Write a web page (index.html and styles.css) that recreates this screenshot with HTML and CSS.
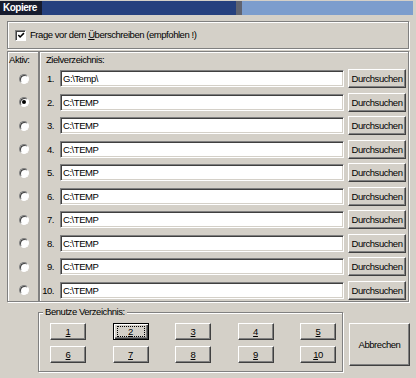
FILE: index.html
```html
<!DOCTYPE html>
<html>
<head>
<meta charset="utf-8">
<link rel="stylesheet" href="styles.css">
</head>
<body>
<div class="window">
  <div class="titlebar">
    <div class="t-name">Kopiere</div>
    <div class="t-dark"></div>
    <div class="t-gap"></div>
    <div class="t-light"></div>
  </div>

  <div class="group opts">
    <span class="check"><svg width="9" height="9" viewBox="0 0 9 9"><polyline points="1.5,4 3.5,6.2 7.8,1.8" fill="none" stroke="#000" stroke-width="1.7"/></svg></span>
    <span class="lbl">Frage vor dem <u>Ü</u>berschreiben (empfohlen !)</span>
  </div>

  <div class="lists">
    <div class="group aktiv">
      <div class="head">Aktiv:</div>
      <div class="radios">
        <span class="radio"></span>
        <span class="radio on"></span>
        <span class="radio"></span>
        <span class="radio"></span>
        <span class="radio"></span>
        <span class="radio"></span>
        <span class="radio"></span>
        <span class="radio"></span>
        <span class="radio"></span>
        <span class="radio"></span>
      </div>
    </div>
    <div class="group ziel">
      <div class="head">Zielverzeichnis:</div>
      <div class="rows">
        <span class="num">1.</span><div class="field">G:\Temp\</div><div class="btn">Durchsuchen</div>
        <span class="num">2.</span><div class="field">C:\TEMP</div><div class="btn">Durchsuchen</div>
        <span class="num">3.</span><div class="field">C:\TEMP</div><div class="btn">Durchsuchen</div>
        <span class="num">4.</span><div class="field">C:\TEMP</div><div class="btn">Durchsuchen</div>
        <span class="num">5.</span><div class="field">C:\TEMP</div><div class="btn">Durchsuchen</div>
        <span class="num">6.</span><div class="field">C:\TEMP</div><div class="btn">Durchsuchen</div>
        <span class="num">7.</span><div class="field">C:\TEMP</div><div class="btn">Durchsuchen</div>
        <span class="num">8.</span><div class="field">C:\TEMP</div><div class="btn">Durchsuchen</div>
        <span class="num">9.</span><div class="field">C:\TEMP</div><div class="btn">Durchsuchen</div>
        <span class="num">10.</span><div class="field">C:\TEMP</div><div class="btn">Durchsuchen</div>
      </div>
    </div>
  </div>

  <div class="bottom">
    <fieldset class="benutze">
      <legend>Benutze Verzeichnis:</legend>
      <div class="picks">
        <div class="btn"><u>1</u></div>
        <div class="btn default"><span class="focus"><u>2</u></span></div>
        <div class="btn"><u>3</u></div>
        <div class="btn"><u>4</u></div>
        <div class="btn"><u>5</u></div>
        <div class="btn"><u>6</u></div>
        <div class="btn"><u>7</u></div>
        <div class="btn"><u>8</u></div>
        <div class="btn"><u>9</u></div>
        <div class="btn"><u>1</u>0</div>
      </div>
    </fieldset>
    <div class="btn cancel">Abbrechen</div>
  </div>
</div>
</body>
</html>
```

FILE: styles.css
```css
html, body {
  margin: 0;
  padding: 0;
  background: #d4d0c8;
}

.window {
  width: 416px;
  height: 378px;
  overflow: hidden;
  background: #d4d0c8;
  font-family: "Liberation Sans", Arial, sans-serif;
  font-size: 9.5px;
  letter-spacing: -0.45px;
  color: #000;
}

.titlebar {
  display: flex;
  margin-top: 1px;
  width: 413px;
  height: 14px;
}

.t-name {
  width: 39px;
  padding-left: 3px;
  background: #161b2e;
  color: #fff;
  font-weight: bold;
  font-size: 10px;
  letter-spacing: -0.5px;
  line-height: 14px;
}

.t-dark {
  width: 194px;
  background: #25407e;
}

.t-gap {
  width: 6px;
  background: #5f6370;
}

.t-light {
  flex: 1;
  background: #7c9dcd;
}

.group {
  box-sizing: border-box;
  border: 1px solid #808080;
  box-shadow: inset 1px 1px 0 #fff, 1px 1px 0 #fff;
}

.opts {
  margin: 6px 0 0 7px;
  width: 402px;
  height: 28px;
  display: flex;
  align-items: center;
  padding-left: 7px;
  gap: 4px;
}

.check {
  box-sizing: border-box;
  width: 11px;
  height: 11px;
  background: #fff;
  border: 1px solid;
  border-color: #808080 #fff #fff #808080;
  box-shadow: inset 1px 1px 0 #404040;
  display: flex;
  align-items: center;
  justify-content: center;
}

.check svg {
  display: block;
  margin: 1px 0 0 1px;
}

.lbl {
  line-height: 12px;
}

.lists {
  display: flex;
  margin: 2px 0 0 7px;
  height: 251px;
}

.aktiv {
  width: 32px;
  padding: 2px 0 0 1px;
}

.ziel {
  width: 370px;
  padding: 2px 2px 0 0;
}

.head {
  line-height: 12px;
  height: 12px;
  margin-bottom: 3px;
}

.ziel .head {
  padding-left: 6px;
}

.radios, .rows {
  display: grid;
  grid-auto-rows: 19px;
  row-gap: 4.5px;
}

.radios {
  justify-items: center;
  align-items: center;
  padding-left: 1px;
}

.rows {
  grid-template-columns: 15px 285px 58px;
  column-gap: 4px;
  align-items: center;
}

.num {
  text-align: right;
  padding-right: 1px;
}

.radio {
  box-sizing: border-box;
  position: relative;
  width: 10px;
  height: 10px;
  border-radius: 50%;
  background: #fff;
  border: 1px solid;
  border-color: #808080 #fff #fff #808080;
  box-shadow: inset 1px 1px 0 #404040;
}

.radio.on::after {
  content: "";
  position: absolute;
  left: 2px;
  top: 2px;
  width: 4px;
  height: 4px;
  border-radius: 50%;
  background: #000;
}

.field {
  box-sizing: border-box;
  height: 17px;
  margin-left: 1px;
  background: #fff;
  border: 1px solid;
  border-color: #808080 #fff #fff #808080;
  box-shadow: inset 1px 1px 0 #404040, inset -1px -1px 0 #d4d0c8;
  padding: 0 0 0 2px;
  line-height: 15px;
  white-space: nowrap;
}

.btn {
  box-sizing: border-box;
  display: flex;
  align-items: center;
  justify-content: center;
  background: #d4d0c8;
  border: 1px solid;
  border-color: #fff #404040 #404040 #fff;
  box-shadow: inset -1px -1px 0 #808080;
  height: 19px;
  white-space: nowrap;
}

.bottom {
  display: flex;
  align-items: flex-start;
  margin: 4px 0 0 38px;
}

.benutze {
  box-sizing: border-box;
  width: 305px;
  height: 66px;
  margin: 0;
  padding: 5px 0 6px 4px;
  border: 1px solid #808080;
  box-shadow: inset 1px 1px 0 #fff, 1px 1px 0 #fff;
  min-width: 0;
}

.benutze legend {
  padding: 0 2px;
  line-height: 12px;
  background: #d4d0c8;
}

.picks {
  display: grid;
  grid-template-columns: repeat(5, 36px);
  grid-auto-rows: 17px;
  column-gap: 26.5px;
  row-gap: 6px;
  margin-left: 7px;
}

.picks .btn {
  height: 17px;
}

.btn.default {
  border: 1px solid #000;
  box-shadow: inset 1px 1px 0 #fff, inset -1px -1px 0 #404040, inset -2px -2px 0 #808080;
}

.focus {
  display: flex;
  align-items: center;
  justify-content: center;
  width: 26px;
  height: 9px;
  outline: 1px dotted #000;
}

.cancel {
  width: 61px;
  height: 43px;
  margin: 17px 0 0 6px;
}
```
